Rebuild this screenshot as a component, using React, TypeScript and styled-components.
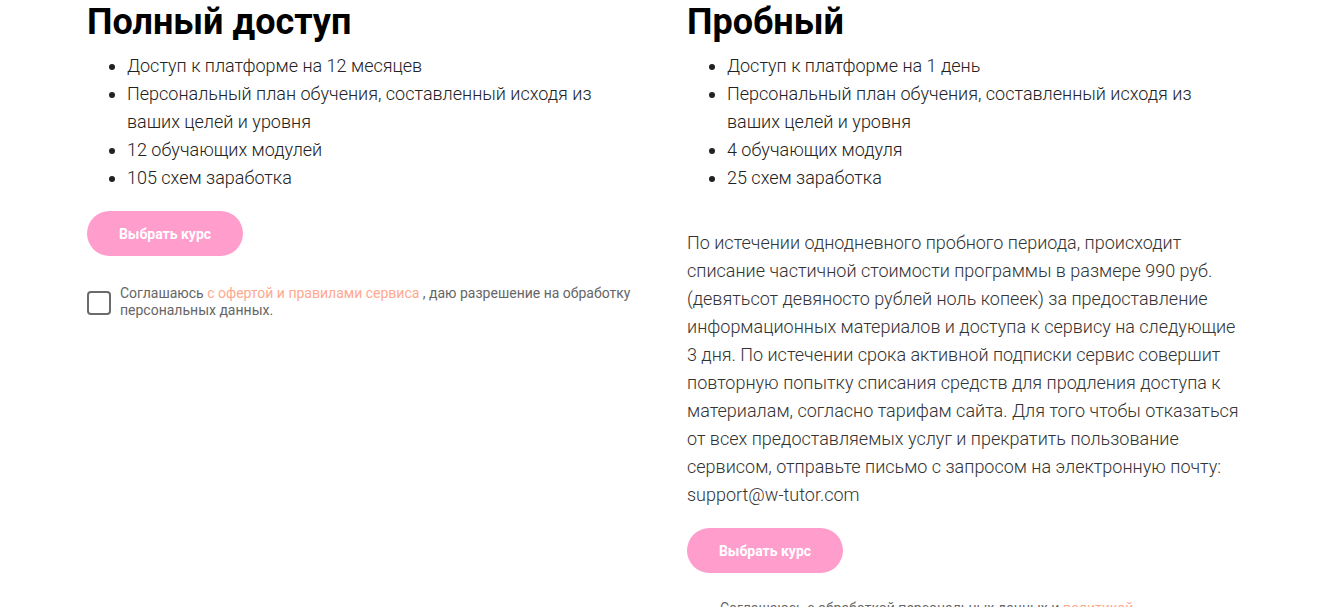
import React from "react";
import styled, { createGlobalStyle } from "styled-components";

const Global = createGlobalStyle`
  html, body { margin: 0; padding: 0; background: #fff; }
  body { font-family: Roboto, "Noto Sans", sans-serif; color: #222; }
  * { box-sizing: border-box; }
`;

const Page = styled.div`
  display: grid;
  grid-template-columns: 556px 556px;
  column-gap: 44px;
  padding: 0 0 0 87px;
  height: 607px;
  overflow: hidden;
`;

const Column = styled.section`
  display: flex;
  flex-direction: column;
  align-items: flex-start;
`;

const Title = styled.h2`
  margin: 0;
  font-family: Roboto, "Liberation Sans", sans-serif;
  font-weight: 700;
  font-size: 36px;
  line-height: 44px;
  color: #000;
`;

const List = styled.ul`
  margin: 8px 0 0;
  padding-left: 40px;
  font-weight: 300;
  font-size: 18px;
  line-height: 28px;
  color: #222;
`;

const Note = styled.p`
  margin: 37px 0 0;
  font-weight: 300;
  font-size: 18px;
  line-height: 28px;
  color: #333;
`;

const Button = styled.button`
  margin-top: 19px;
  width: 156px;
  height: 45px;
  border: none;
  border-radius: 23px;
  background: #ff9dcc;
  color: #fff;
  font-family: Roboto, sans-serif;
  font-weight: 700;
  font-size: 14px;
  cursor: pointer;
`;

const Agree = styled.label<{ $top: number }>`
  margin-top: ${(p) => p.$top}px;
  display: flex;
  align-items: flex-start;
  gap: 9px;
  font-size: 14px;
  line-height: 17px;
  color: #666;
`;

const Box = styled.span<{ $offset: number }>`
  flex: none;
  width: 24px;
  height: 24px;
  margin-top: ${(p) => p.$offset}px;
  border: 2px solid #6b6b6b;
  border-radius: 4px;
`;

const Link = styled.span`
  color: #ffa98f;
`;

const AgreeText = styled.span`
  max-width: 520px;
  padding-top: 1px;
`;

export default function App() {
  return (
    <>
      <Global />
      <Page>
        <Column>
          <Title>Полный доступ</Title>
          <List>
            <li>Доступ к платформе на 12 месяцев</li>
            <li>Персональный план обучения, составленный исходя из ваших целей и уровня</li>
            <li>12 обучающих модулей</li>
            <li>105 схем заработка</li>
          </List>
          <Button>Выбрать курс</Button>
          <Agree $top={28}>
            <Box $offset={7} />
            <AgreeText>
              Соглашаюсь <Link>с офертой и правилами сервиса</Link> , даю разрешение на обработку персональных данных.
            </AgreeText>
          </Agree>
        </Column>
        <Column>
          <Title>Пробный</Title>
          <List>
            <li>Доступ к платформе на 1 день</li>
            <li>Персональный план обучения, составленный исходя из ваших целей и уровня</li>
            <li>4 обучающих модуля</li>
            <li>25 схем заработка</li>
          </List>
          <Note>
            По истечении однодневного пробного периода, происходит списание частичной стоимости программы в размере 990 руб. (девятьсот девяносто рублей ноль копеек) за предоставление информационных материалов и доступа к сервису на следующие 3 дня. По истечении срока активной подписки сервис совершит повторную попытку списания средств для продления доступа к материалам, согласно тарифам сайта. Для того чтобы отказаться от всех предоставляемых услуг и прекратить пользование сервисом, отправьте письмо с запросом на электронную почту: support@w-tutor.com
          </Note>
          <Button>Выбрать курс</Button>
          <Agree $top={26}>
            <Box $offset={10} />
            <AgreeText>
              Соглашаюсь с обработкой персональных данных и <Link>политикой конфиденциальности</Link>
            </AgreeText>
          </Agree>
        </Column>
      </Page>
    </>
  );
}
